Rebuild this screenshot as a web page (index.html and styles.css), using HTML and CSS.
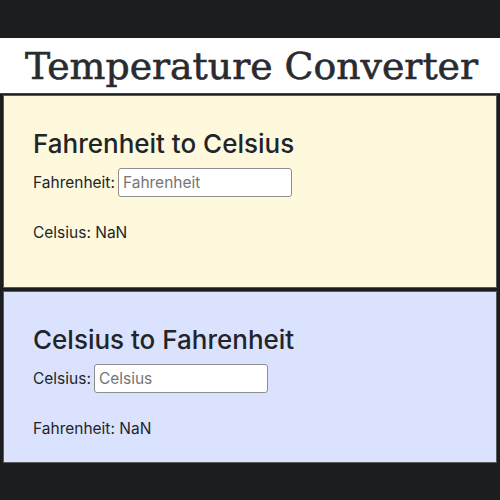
FILE: index.html
```html
<!DOCTYPE html>
<html>
<head>
<meta charset="utf-8">
<link rel="stylesheet" href="styles.css">
</head>
<body>
<header class="title-bar"><h1 class="title">Temperature Converter</h1></header>
<main class="panels">
  <section class="panel panel-f">
    <h2 class="panel-title">Fahrenheit to Celsius</h2>
    <div class="field"><label class="label">Fahrenheit:</label><input class="input" type="text" placeholder="Fahrenheit"></div>
    <p class="result">Celsius: NaN</p>
  </section>
  <section class="panel panel-c">
    <h2 class="panel-title">Celsius to Fahrenheit</h2>
    <div class="field"><label class="label">Celsius:</label><input class="input" type="text" placeholder="Celsius"></div>
    <p class="result">Fahrenheit: NaN</p>
  </section>
</main>
</body>
</html>
```
FILE: styles.css
```css
html, body {
  margin: 0;
  padding: 0;
  background: #1c1d1f;
  width: 500px;
  height: 500px;
  overflow: hidden;
}
body {
  font-family: Inter, "Liberation Sans", Arial, sans-serif;
  color: #212529;
}
.title-bar {
  margin-top: 38px;
  height: 55px;
  background: #ffffff;
  display: flex;
  align-items: center;
  justify-content: center;
  border-bottom: 1px solid #444;
}
.title {
  margin: 0 0 0 3px;
  font-family: "DejaVu Serif", serif;
  font-weight: normal;
  font-size: 37.8px;
  letter-spacing: 0;
  color: #2a2b2e;
  -webkit-text-stroke: 0.6px #2a2b2e;
}
.panels {
  display: flex;
  flex-direction: column;
  gap: 3px;
  padding: 1px 3px 0 3px;
}
.panel {
  border: 1px solid #5a5a5a;
  padding: 32px 0 0 29px;
  box-sizing: border-box;
}
.panel-f {
  background: #fef8dd;
  height: 193px;
}
.panel-c {
  background: #dbe2fe;
  height: 172px;
}
.panel-title {
  margin: 0 0 9px 0;
  font-size: 26px;
  font-weight: 500;
  line-height: 31px;
  letter-spacing: 0;
}
.field {
  display: flex;
  align-items: center;
  gap: 3px;
  font-size: 15.5px;
}
.input {
  width: 174px;
  height: 29px;
  box-sizing: border-box;
  border: 1px solid #8f8f8f;
  border-radius: 3px;
  padding: 0 4px;
  font-family: Inter, "Liberation Sans", Arial, sans-serif;
  font-size: 15.5px;
  background: #fff;
}
.input::placeholder {
  color: #757575;
}
.result {
  margin: 26px 0 0 0;
  font-size: 15.5px;
}
```
